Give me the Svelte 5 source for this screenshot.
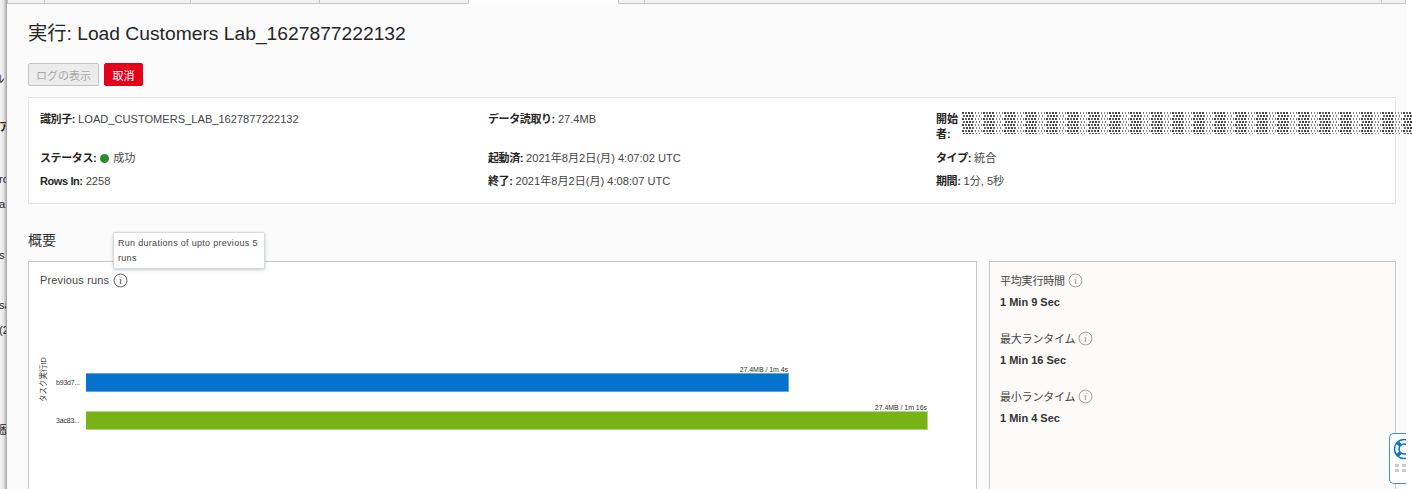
<script>
  const details = [
    [
      { label: '識別子:', value: 'LOAD_CUSTOMERS_LAB_1627877222132' },
      { label: 'ステータス:', value: '成功', ok: true },
      { label: 'Rows In:', value: '2258' }
    ],
    [
      { label: 'データ読取り:', value: '27.4MB' },
      { label: '起動済:', value: '2021年8月2日(月) 4:07:02 UTC' },
      { label: '終了:', value: '2021年8月2日(月) 4:08:07 UTC' }
    ],
    [
      { label: '開始者:', redacted: true },
      { label: 'タイプ:', value: '統合' },
      { label: '期間:', value: '1分, 5秒' }
    ]
  ];
  const runs = [
    { id: 'b93d7...', label: '27.4MB / 1m 4s', width: 703, color: '#0572ce', edge: '#5fa5e0' },
    { id: '3ac83...', label: '27.4MB / 1m 16s', width: 842, color: '#78b316', edge: '#b4d585' }
  ];
  const stats = [
    { label: '平均実行時間', value: '1 Min 9 Sec' },
    { label: '最大ランタイム', value: '1 Min 16 Sec' },
    { label: '最小ランタイム', value: '1 Min 4 Sec' }
  ];
  const tabs = [38, 147, 130, 150, 151, 27, 738, 25];
  const sideText = [
    { top: 72, text: 'ﾚ' },
    { top: 120, text: 'ア', bold: true },
    { top: 172, text: 'ro' },
    { top: 197, text: 'a' },
    { top: 248, text: 's' },
    { top: 298, text: 'sa' },
    { top: 323, text: '(2' },
    { top: 423, text: '歴' }
  ];
</script>

<div class="page">
  <aside class="side">
    {#each sideText as s}
      <span class="side-text" class:bold={s.bold} style="top: {s.top}px">{s.text}</span>
    {/each}
  </aside>

  <main class="main">
    <div class="tabs">
      {#each tabs as w, i}
        <div class="tab" class:active={i === 4} style="width: {w}px"></div>
      {/each}
    </div>

    <div class="content">
      <h1>実行: Load Customers Lab_1627877222132</h1>

      <div class="actions">
        <button class="btn disabled" disabled>ログの表示</button>
        <button class="btn danger">取消</button>
      </div>

      <section class="details">
        {#each details as col, c}
          <div class="col">
            {#each col as row, r}
              <div class="row row-{r}">
                <b class:narrow={row.redacted}>{row.label}</b>
                {#if row.ok}<i class="dot"></i>{/if}
                {#if row.redacted}
                  <svg class="redacted" width="450" height="22">
                    <defs>
                      <pattern id="dither" width="21" height="6" patternUnits="userSpaceOnUse">
                        <rect x="0" y="0" width="2" height="2" fill="#444" />
                        <rect x="3" y="0" width="2" height="2" fill="#666" />
                        <rect x="6" y="0" width="2" height="2" fill="#444" />
                        <rect x="9" y="0" width="2" height="2" fill="#444" />
                        <rect x="13" y="0" width="1" height="2" fill="#777" />
                        <rect x="16" y="0" width="1" height="2" fill="#888" />
                        <rect x="19" y="0" width="1" height="2" fill="#777" />
                        <rect x="1" y="3" width="2" height="2" fill="#666" />
                        <rect x="4" y="3" width="2" height="2" fill="#444" />
                        <rect x="7" y="3" width="2" height="2" fill="#444" />
                        <rect x="10" y="3" width="2" height="2" fill="#666" />
                        <rect x="14" y="3" width="1" height="2" fill="#888" />
                        <rect x="17" y="3" width="1" height="2" fill="#777" />
                      </pattern>
                    </defs>
                    <rect width="450" height="22" fill="url(#dither)" />
                  </svg>
                {:else}
                  <span class="value">{row.value}</span>
                {/if}
              </div>
            {/each}
          </div>
        {/each}
      </section>

      <h2>概要</h2>

      <div class="panels">
        <section class="chart-panel">
          <div class="chart-title">
            Previous runs
            <svg class="info dark" viewBox="0 0 16 16"><circle cx="8" cy="8" r="6.9" /><path d="M8.6 4.4v.8M7 7.2h1.5l-.9 4.2h1.3" /></svg>
          </div>
          <div class="tooltip">Run durations of upto previous 5 runs</div>

          <div class="chart">
            <div class="axis-name"><span>タスク実行ID</span></div>
            <div class="bars">
              {#each runs as run}
                <div class="bar-row">
                  <span class="bar-id">{run.id}</span>
                  <div class="bar" style="width: {run.width}px; background: {run.color}; border-color: {run.edge}">
                    <span class="bar-label">{run.label}</span>
                  </div>
                </div>
              {/each}
            </div>
          </div>
        </section>

        <section class="stats-panel">
          {#each stats as stat}
            <div class="stat">
              <div class="stat-label">
                <span>{stat.label}</span>
                <svg class="info" viewBox="0 0 16 16"><circle cx="8" cy="8" r="6.9" /><path d="M8.6 4.4v.8M7 7.2h1.5l-.9 4.2h1.3" /></svg>
              </div>
              <div class="stat-value">{stat.value}</div>
            </div>
          {/each}
        </section>
      </div>
    </div>
  </main>

  <div class="help">
    <svg viewBox="0 0 22 22">
      <circle class="ring" cx="11" cy="11" r="9.5" />
      <circle class="ring" cx="11" cy="11" r="5" />
      <path class="bands" d="M4.3 4.3l3.2 3.2M17.7 4.3l-3.2 3.2M4.3 17.7l3.2-3.2M17.7 17.7l-3.2-3.2" />
    </svg>
    <div class="grip"><i></i><i></i><i></i><i></i></div>
  </div>
</div>

<style>
  :global(body) {
    margin: 0;
    background: #fff;
  }
  .page {
    position: relative;
    display: flex;
    width: 1412px;
    height: 489px;
    overflow: hidden;
    font-family: "Liberation Sans", "Noto Sans CJK JP", sans-serif;
    color: #252525;
    font-size: 11px;
  }
  .side {
    position: relative;
    flex: 0 0 7px;
    box-sizing: border-box;
    background: linear-gradient(90deg, #f4f4f4 0, #e2e2e2 65%, #b4b4b4 100%);
    border-right: 1px solid #a9a9a9;
  }
  .side-text {
    position: absolute;
    left: -1px;
    font-size: 11px;
    line-height: 14px;
    color: #222;
    white-space: nowrap;
    width: 7px;
    overflow: hidden;
  }
  .side-text.bold {
    font-weight: bold;
  }
  .main {
    flex: 0 0 1399px;
    background: #fbfbfb;
  }
  .tabs {
    display: flex;
    height: 4px;
  }
  .tab {
    box-sizing: border-box;
    border: 1px solid #c5c5c5;
    border-top: 0;
    margin-right: -1px;
    background: #f1f1f1;
    flex: none;
  }
  .tab.active {
    position: relative;
    background: #fff;
    border-bottom-color: #fff;
  }
  .content {
    padding: 0 10px 0 21px;
  }
  h1 {
    margin: 18px 0 0;
    font-size: 19.25px;
    line-height: 24px;
    font-weight: normal;
    color: #252525;
    white-space: nowrap;
  }
  .actions {
    display: flex;
    gap: 5px;
    margin-top: 17px;
  }
  .btn {
    box-sizing: border-box;
    height: 23px;
    padding: 0;
    border-radius: 2px;
    font: inherit;
    font-size: 11px;
    white-space: nowrap;
  }
  .btn.disabled {
    width: 71px;
    background: #ececec;
    border: 1px solid #c4c4c4;
    color: #a8a8a8;
  }
  .btn.danger {
    width: 39px;
    background: #e4001b;
    border: 1px solid #e4001b;
    color: #fff;
  }
  .details {
    box-sizing: border-box;
    display: grid;
    grid-template-columns: 448px 448px 1fr;
    height: 107px;
    margin-top: 11px;
    padding: 14px 0 0 11px;
    background: #fff;
    border: 1px solid #e4e4e4;
  }
  .col {
    min-width: 0;
  }
  .row {
    white-space: nowrap;
    line-height: 15px;
    display: flex;
    align-items: center;
    gap: 3px;
    color: #444;
  }
  .row-0 {
    height: 31px;
    align-items: flex-start;
    margin-bottom: 8px;
  }
  .row-1 {
    height: 15px;
    margin-bottom: 8px;
  }
  .row b {
    color: #252525;
    letter-spacing: -0.4px;
  }
  .row b.narrow {
    flex: 0 0 23px;
    letter-spacing: 0;
    white-space: normal;
    line-height: 15px;
  }
  .value {
    font-size: 11.1px;
  }
  .dot {
    width: 9px;
    height: 9px;
    margin: 0 1px 0 1px;
    border-radius: 50%;
    background: #2f8a33;
  }
  .redacted {
    display: block;
    flex: none;
  }
  h2 {
    margin: 27px 0 0;
    font-size: 14px;
    line-height: 18px;
    font-weight: normal;
    color: #333;
  }
  .panels {
    display: flex;
    gap: 12px;
    margin-top: 12px;
  }
  .chart-panel {
    position: relative;
    box-sizing: border-box;
    width: 949px;
    height: 240px;
    background: #fff;
    border: 1px solid #c3c8d0;
    padding: 10px 11px;
    flex: none;
  }
  .chart-title {
    display: flex;
    align-items: center;
    gap: 4px;
    font-size: 11px;
    letter-spacing: 0.15px;
    line-height: 16px;
    color: #444;
  }
  .info {
    width: 15px;
    height: 15px;
    margin-top: 1px;
    flex: none;
    fill: none;
    stroke: #999;
    stroke-width: 1;
  }
  .info.dark {
    stroke: #555;
  }
  .tooltip {
    position: absolute;
    left: 84px;
    top: -30px;
    box-sizing: border-box;
    width: 152px;
    height: 37px;
    padding: 3px 4px 0;
    font-size: 9px;
    line-height: 15px;
    letter-spacing: 0.3px;
    color: #444;
    background: #fff;
    border: 1px solid #d6dbe2;
    border-radius: 2px;
    box-shadow: 0 1px 3px rgba(60, 70, 90, 0.3);
  }
  .chart {
    display: flex;
    margin-top: 69px;
  }
  .axis-name {
    width: 8px;
    height: 45px;
    margin-top: 0;
    color: #444;
    font-size: 7.5px;
    line-height: 8px;
  }
  .axis-name span {
    display: block;
    height: 45px;
    writing-mode: vertical-rl;
    text-orientation: sideways;
    text-align: left;
    transform: rotate(180deg);
    white-space: nowrap;
  }
  .bars {
    display: flex;
    flex-direction: column;
    gap: 19px;
    margin-top: 16px;
  }
  .bar-row {
    display: flex;
    align-items: center;
    height: 19px;
  }
  .bar-id {
    width: 24px;
    margin-left: 8px;
    margin-right: 6px;
    font-size: 7px;
    letter-spacing: -0.2px;
    color: #333;
  }
  .bar {
    position: relative;
    box-sizing: border-box;
    height: 19px;
    border: 1px solid;
    border-left: 0;
  }
  .bar-label {
    position: absolute;
    right: 0;
    bottom: 100%;
    font-size: 7px;
    line-height: 9px;
    letter-spacing: -0.05px;
    white-space: nowrap;
    color: #333;
  }
  .stats-panel {
    box-sizing: border-box;
    width: 407px;
    height: 240px;
    background: #fcfbfa;
    border: 1px solid #c3c8d0;
    padding: 10px 10px;
    flex: none;
  }
  .stat {
    height: 58px;
  }
  .stat-label {
    display: flex;
    align-items: center;
    gap: 3px;
    height: 16px;
    font-size: 11px;
    color: #444;
  }
  .stat-label span {
    letter-spacing: -0.2px;
  }
  .stat-value {
    margin-top: 7px;
    font-size: 11px;
    font-weight: bold;
    line-height: 14px;
    color: #333;
  }
  .help {
    position: absolute;
    left: 1389px;
    top: 433px;
    box-sizing: border-box;
    width: 17px;
    height: 51px;
    padding: 4px 0 0 3px;
    overflow: hidden;
    background: #fff;
    border: 1px solid #3f8fd8;
    border-right: 0;
    border-radius: 5px 0 0 5px;
  }
  .help svg {
    display: block;
    width: 22px;
    height: 22px;
  }
  .help .ring {
    fill: none;
    stroke: #0572ce;
    stroke-width: 1.6;
  }
  .help .bands {
    fill: none;
    stroke: #0572ce;
    stroke-width: 3.4;
  }
  .grip {
    display: grid;
    grid-template-columns: 4px 4px;
    gap: 2px 3px;
    margin: 4px 0 0 2px;
  }
  .grip i {
    height: 3px;
    background: #ccc;
  }
</style>
